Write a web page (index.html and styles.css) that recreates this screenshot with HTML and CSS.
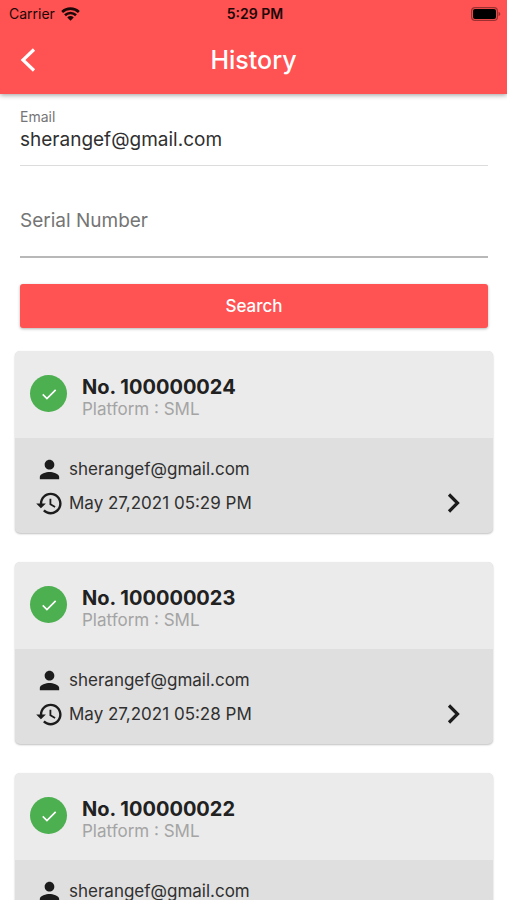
FILE: index.html
```html
<!DOCTYPE html>
<html lang="en">
<head>
<meta charset="utf-8">
<meta name="viewport" content="width=device-width, initial-scale=1">
<title>History</title>
<link rel="stylesheet" href="styles.css">
</head>
<body>
<svg class="sprite" aria-hidden="true">
  <symbol id="check" viewBox="0 0 24 24"><path d="M4.500 12.500l5 5L20 7" fill="none" stroke="currentColor" stroke-width="2"/></symbol>
  <symbol id="person" viewBox="0 0 24 24"><path fill="currentColor" d="M12 12c2.210 0 4-1.790 4-4s-1.790-4-4-4-4 1.790-4 4 1.790 4 4 4zm0 2c-2.670 0-8 1.340-8 4v2h16v-2c0-2.660-5.330-4-8-4z"/></symbol>
  <symbol id="clock" viewBox="0 0 24 24"><path fill="currentColor" d="M13 3c-4.970 0-9 4.030-9 9H1l3.890 3.890.070.140L9 12H6c0-3.870 3.130-7 7-7s7 3.130 7 7-3.130 7-7 7c-1.930 0-3.680-.790-4.940-2.060l-1.420 1.420C8.270 19.990 10.510 21 13 21c4.970 0 9-4.030 9-9s-4.030-9-9-9zm-1 5v5l4.280 2.540.720-1.210-3.500-2.080V8H12z"/></symbol>
  <symbol id="chevron" viewBox="0 0 16 24"><path d="M3 3.500L11.500 12L3 20.500" fill="none" stroke="currentColor" stroke-width="3.200"/></symbol>
</svg>
<header class="top">
  <div class="status">
    <span class="carrier">Carrier
      <svg class="wifi" viewBox="0 0 20 14" aria-hidden="true"><path d="M1.200 4.900a12.600 12.600 0 0 1 17.600 0M4.200 8.300a8.200 8.200 0 0 1 11.600 0" fill="none" stroke="currentColor" stroke-width="2.700"/><path d="M10 14L6.600 10.600a4.800 4.800 0 0 1 6.800 0z" fill="currentColor"/></svg>
    </span>
    <span class="time">5:29 PM</span>
    <svg class="battery" viewBox="0 0 30 14" aria-hidden="true"><rect x="0.600" y="0.600" width="25.800" height="12.800" rx="3.500" fill="none" stroke="#000" stroke-opacity=".4" stroke-width="1.200"/><rect x="2" y="2" width="23" height="10" rx="2" fill="#000"/><path d="M27.500 4.800c2.400.8 2.400 3.600 0 4.400z" fill="#000" fill-opacity=".4"/></svg>
  </div>
  <div class="bar">
    <button class="back" type="button" aria-label="Back"><svg viewBox="0 0 16 24"><path d="M14 1.500L3 12l11 10.500" fill="none" stroke="currentColor" stroke-width="3.200"/></svg></button>
    <h1>History</h1>
  </div>
</header>
<main>
  <form class="search">
    <div class="field">
      <label for="email">Email</label>
      <input id="email" type="email" value="sherangef@gmail.com" readonly>
    </div>
    <div class="field empty">
      <label for="serial">Serial Number</label>
      <input id="serial" type="text">
    </div>
    <button class="submit" type="button">Search</button>
  </form>
  <section class="list">
    <article class="card">
      <div class="head">
        <span class="badge"><svg><use href="#check"/></svg></span>
        <div><h2>No. 100000024</h2><p>Platform : SML</p></div>
      </div>
      <div class="body">
        <div class="details">
          <p><svg><use href="#person"/></svg>sherangef@gmail.com</p>
          <p><svg><use href="#clock"/></svg>May 27,2021 05:29 PM</p>
        </div>
        <a class="open" href="#" aria-label="Open 100000024"><svg><use href="#chevron"/></svg></a>
      </div>
    </article>
    <article class="card">
      <div class="head">
        <span class="badge"><svg><use href="#check"/></svg></span>
        <div><h2>No. 100000023</h2><p>Platform : SML</p></div>
      </div>
      <div class="body">
        <div class="details">
          <p><svg><use href="#person"/></svg>sherangef@gmail.com</p>
          <p><svg><use href="#clock"/></svg>May 27,2021 05:28 PM</p>
        </div>
        <a class="open" href="#" aria-label="Open 100000023"><svg><use href="#chevron"/></svg></a>
      </div>
    </article>
    <article class="card">
      <div class="head">
        <span class="badge"><svg><use href="#check"/></svg></span>
        <div><h2>No. 100000022</h2><p>Platform : SML</p></div>
      </div>
      <div class="body">
        <div class="details">
          <p><svg><use href="#person"/></svg>sherangef@gmail.com</p>
        </div>
      </div>
    </article>
  </section>
</main>
</body>
</html>
```
FILE: styles.css
```css
* { box-sizing: border-box; }
html { height: 100%; }
body {
  margin: 0;
  height: 100%;
  display: flex;
  flex-direction: column;
  overflow: hidden;
  background: #fff;
  color: #212121;
  font-family: Inter, "Liberation Sans", sans-serif;
}
h1, h2, p { margin: 0; }
svg { display: block; flex: none; }
button { border: 0; font: inherit; cursor: pointer; }
.sprite { position: absolute; width: 0; height: 0; }

.top {
  flex: none;
  background: #ff5252;
  box-shadow: 0 1px 5px rgba(0, 0, 0, .4);
}
.status {
  display: grid;
  grid-template-columns: 1fr auto 1fr;
  align-items: center;
  height: 27px;
  padding: 0 6px 0 9px;
  color: #1c0808;
  font-size: 14px;
}
.carrier { display: flex; align-items: center; gap: 6px; }
.wifi { width: 19px; height: 14px; }
.time { font-weight: 600; }
.battery { width: 30px; height: 14px; justify-self: end; }
.bar {
  display: grid;
  grid-template-columns: 56px 1fr 56px;
  align-items: center;
  height: 67px;
  padding-bottom: 2px;
  color: #fff;
}
.back { padding: 0 20px; background: none; color: inherit; }
.back svg { width: 16px; height: 24px; }
h1 { text-align: center; font-size: 25px; font-weight: 500; }

main { flex: 1; min-height: 0; overflow: hidden; }
.search { display: flex; flex-direction: column; padding: 13px 19px 0 20px; }
.field {
  display: flex;
  flex-direction: column;
  height: 59px;
  border-bottom: 1px solid #dcdcdc;
}
.field label { color: #757575; font-size: 14px; line-height: 20px; }
.field input {
  width: 100%;
  height: 26px;
  padding: 0;
  border: 0;
  outline: 0;
  background: none;
  color: #303030;
  font: 19px/26px Inter, "Liberation Sans", sans-serif;
}
.field.empty {
  display: grid;
  align-items: center;
  margin-top: 20px;
  height: 72px;
  border-bottom: 2px solid #b8b8b8;
}
.field.empty label, .field.empty input { grid-area: 1 / 1; }
.field.empty label { font-size: 19px; }
.submit {
  height: 44px;
  margin-top: 26px;
  border-radius: 3px;
  background: #ff5252;
  color: #fff;
  font-size: 17px;
  font-weight: 500;
  box-shadow: 0 1px 3px rgba(0, 0, 0, .3);
}

.list { display: flex; flex-direction: column; gap: 29px; padding: 23px 14px 0 15px; }
.card {
  flex: none;
  overflow: hidden;
  border-radius: 5px;
  background: #dfdfdf;
  box-shadow: 0 1px 2px rgba(0, 0, 0, .25);
}
.head {
  display: flex;
  align-items: flex-start;
  gap: 15px;
  height: 87px;
  padding: 24px 15px 0;
  background: #ebebeb;
}
.badge {
  display: grid;
  place-items: center;
  width: 37px;
  height: 37px;
  border-radius: 50%;
  background: #4caf50;
  color: #fff;
}
.badge svg { width: 20px; height: 20px; }
h2 { font-size: 20px; line-height: 24px; font-weight: 700; }
.head p { color: #a4a4a4; font-size: 17px; line-height: 20px; }
.body {
  display: flex;
  align-items: flex-end;
  justify-content: space-between;
  padding: 14px 31px 13px 20px;
}
.details p {
  display: flex;
  align-items: center;
  gap: 5px;
  height: 34px;
  color: #303030;
  font-size: 17px;
}
.details svg { width: 29px; height: 29px; color: #1c1c1c; }
.open { display: grid; align-items: center; height: 34px; color: #1c1c1c; }
.open svg { width: 16px; height: 24px; }
```
